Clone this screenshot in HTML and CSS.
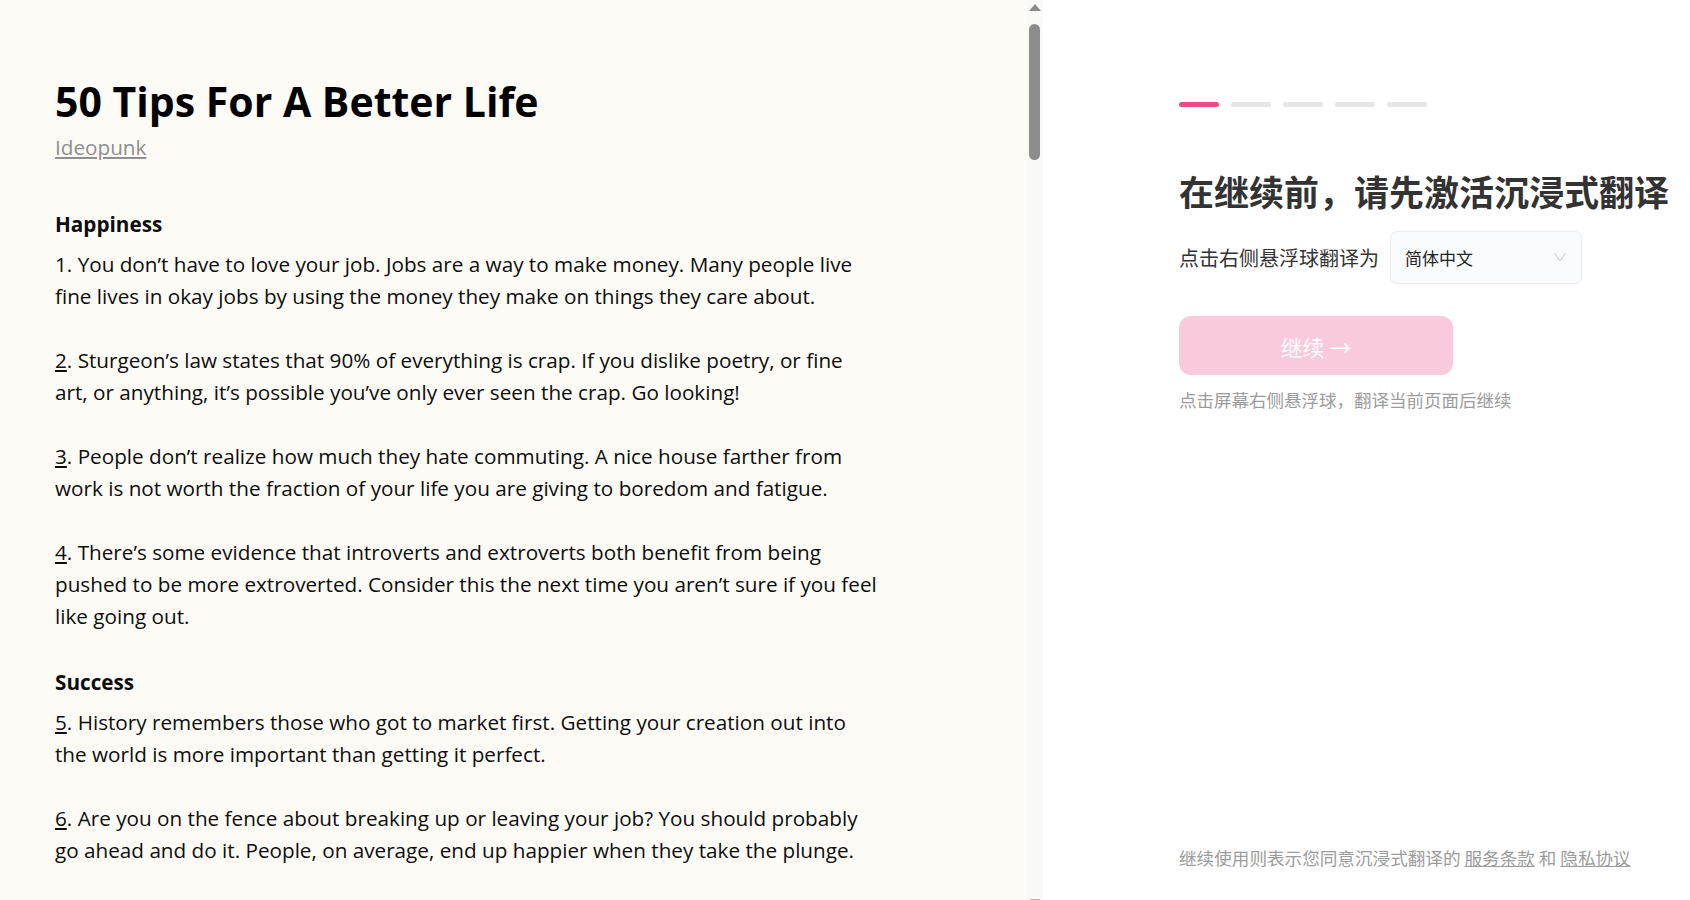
FILE: index.html
```html
<!DOCTYPE html>
<html lang="en">
<head>
<meta charset="utf-8">
<title>50 Tips For A Better Life</title>
<link rel="stylesheet" href="styles.css">
</head>
<body>
<main class="reader">
  <article class="article">
    <h1 class="title">50 Tips For A Better Life</h1>
    <div class="author"><a href="#">Ideopunk</a></div>

    <h2 class="section">Happiness</h2>
    <p>1. You don’t have to love your job. Jobs are a way to make money. Many people live fine lives in okay jobs by using the money they make on things they care about.</p>
    <p><a href="#">2</a>. Sturgeon’s law states that 90% of everything is crap. If you dislike poetry, or fine art, or anything, it’s possible you’ve only ever seen the crap. Go looking!</p>
    <p><a href="#">3</a>. People don’t realize how much they hate commuting. A nice house farther from work is not worth the fraction of your life you are giving to boredom and fatigue.</p>
    <p><a href="#">4</a>. There’s some evidence that introverts and extroverts both benefit from being pushed to be more extroverted. Consider this the next time you aren’t sure if you feel like going out.</p>

    <h2 class="section">Success</h2>
    <p><a href="#">5</a>. History remembers those who got to market first. Getting your creation out into the world is more important than getting it perfect.</p>
    <p><a href="#">6</a>. Are you on the fence about breaking up or leaving your job? You should probably go ahead and do it. People, on average, end up happier when they take the plunge.</p>
  </article>
</main>
<div class="scrolltrack">
  <span class="arrow-up"></span>
  <span class="thumb"></span>
  <span class="arrow-down"></span>
</div>
<aside class="panel">
  <div class="steps">
    <span class="step active"></span>
    <span class="step"></span>
    <span class="step"></span>
    <span class="step"></span>
    <span class="step"></span>
  </div>
  <h2 class="panel-title">在继续前，请先激活沉浸式翻译</h2>
  <div class="lang-row">
    <span class="lang-label">点击右侧悬浮球翻译为</span>
    <div class="select">
      <span>简体中文</span>
      <svg class="chevron" width="12" height="10" viewBox="0 0 12 10"><polyline points="0.5,1 6,9 11.5,1" fill="none" stroke="#c4c4c4" stroke-width="1"/></svg>
    </div>
  </div>
  <button class="continue" type="button">继续 →</button>
  <p class="hint">点击屏幕右侧悬浮球，翻译当前页面后继续</p>
  <p class="legal">继续使用则表示您同意沉浸式翻译的 <a href="#">服务条款</a> 和 <a href="#">隐私协议</a></p>
</aside>
</body>
</html>
```
FILE: styles.css
```css
html, body {
  margin: 0;
  padding: 0;
}
body {
  display: flex;
  width: 1690px;
  height: 900px;
  overflow: hidden;
  background: #ffffff;
}

/* ---------- reader (left) ---------- */
.reader {
  width: 1026px;
  flex: none;
  height: 900px;
  overflow: hidden;
  background: #fcfbf6;
  font-family: "Open Sans", "Noto Sans", sans-serif;
  color: #0d0d0d;
}
.article {
  width: 822px;
  padding: 76px 0 0 55px;
}
.title {
  margin: 0 0 7px;
  font-size: 41px;
  line-height: 50px;
  font-weight: 700;
  color: #000000;
}
.author {
  margin: 0 0 47px;
  font-size: 20.7px;
  line-height: 28px;
}
.author a {
  color: #8f8f8f;
  text-decoration: underline;
}
.section {
  margin: 34px 0 8px;
  font-size: 20.7px;
  line-height: 32px;
  font-weight: 700;
}
.article p {
  margin: 0 0 32px;
  font-size: 20.7px;
  line-height: 32px;
}
.article p a {
  color: #0d0d0d;
  text-decoration: underline;
}

/* ---------- scrollbar ---------- */
.scrolltrack {
  width: 17px;
  flex: none;
  height: 900px;
  background: #f9f9f8;
  display: flex;
  flex-direction: column;
  align-items: center;
}
.arrow-up {
  margin-top: 4px;
  width: 0;
  height: 0;
  border-left: 6px solid transparent;
  border-right: 6px solid transparent;
  border-bottom: 7px solid #8c8c8c;
}
.thumb {
  margin-top: 13px;
  width: 11px;
  height: 136px;
  border-radius: 6px;
  background: #8c8c8c;
}
.arrow-down {
  margin-top: auto;
  margin-bottom: -2px;
  width: 10px;
  height: 3px;
  background: #b5b5b5;
}

/* ---------- panel (right) ---------- */
.panel {
  flex: 1;
  display: flex;
  flex-direction: column;
  align-items: flex-start;
  padding: 102px 0 30px 136px;
  font-family: "Noto Sans CJK SC", "Open Sans", sans-serif;
  color: #333333;
  font-size: 17.5px;
}
.steps {
  display: flex;
  gap: 12px;
}
.step {
  width: 40px;
  height: 5px;
  border-radius: 3px;
  background: #e6e6e6;
}
.step.active {
  background: #ea4c89;
}
.panel-title {
  margin: 63px 0 0;
  font-size: 35px;
  line-height: 42px;
  font-weight: 700;
  color: #333333;
  white-space: nowrap;
}
.lang-row {
  margin-top: 19px;
  display: flex;
  align-items: center;
  gap: 11px;
}
.lang-label {
  font-size: 20px;
  color: #333333;
}
.select {
  box-sizing: border-box;
  width: 192px;
  height: 53px;
  padding: 0 15px 0 14px;
  display: flex;
  align-items: center;
  justify-content: space-between;
  background: #f9fbfc;
  border: 1px solid #ececec;
  border-radius: 7px;
  font-size: 17px;
  color: #222222;
}
.chevron {
  margin-top: -2px;
}
.continue {
  margin-top: 32px;
  width: 274px;
  height: 59px;
  border: none;
  border-radius: 12px;
  background: #f9c9dc;
  color: #ffffff;
  font-family: "Noto Sans CJK SC", "Open Sans", sans-serif;
  font-size: 22px;
  padding: 0;
}
.hint {
  margin: 13px 0 0;
  line-height: 24px;
  color: #9c9c9c;
}
.legal {
  margin: auto 0 0;
  font-size: 17.6px;
  line-height: 24px;
  color: #9c9c9c;
}
.legal a {
  color: #9c9c9c;
  text-decoration: underline;
}
```
